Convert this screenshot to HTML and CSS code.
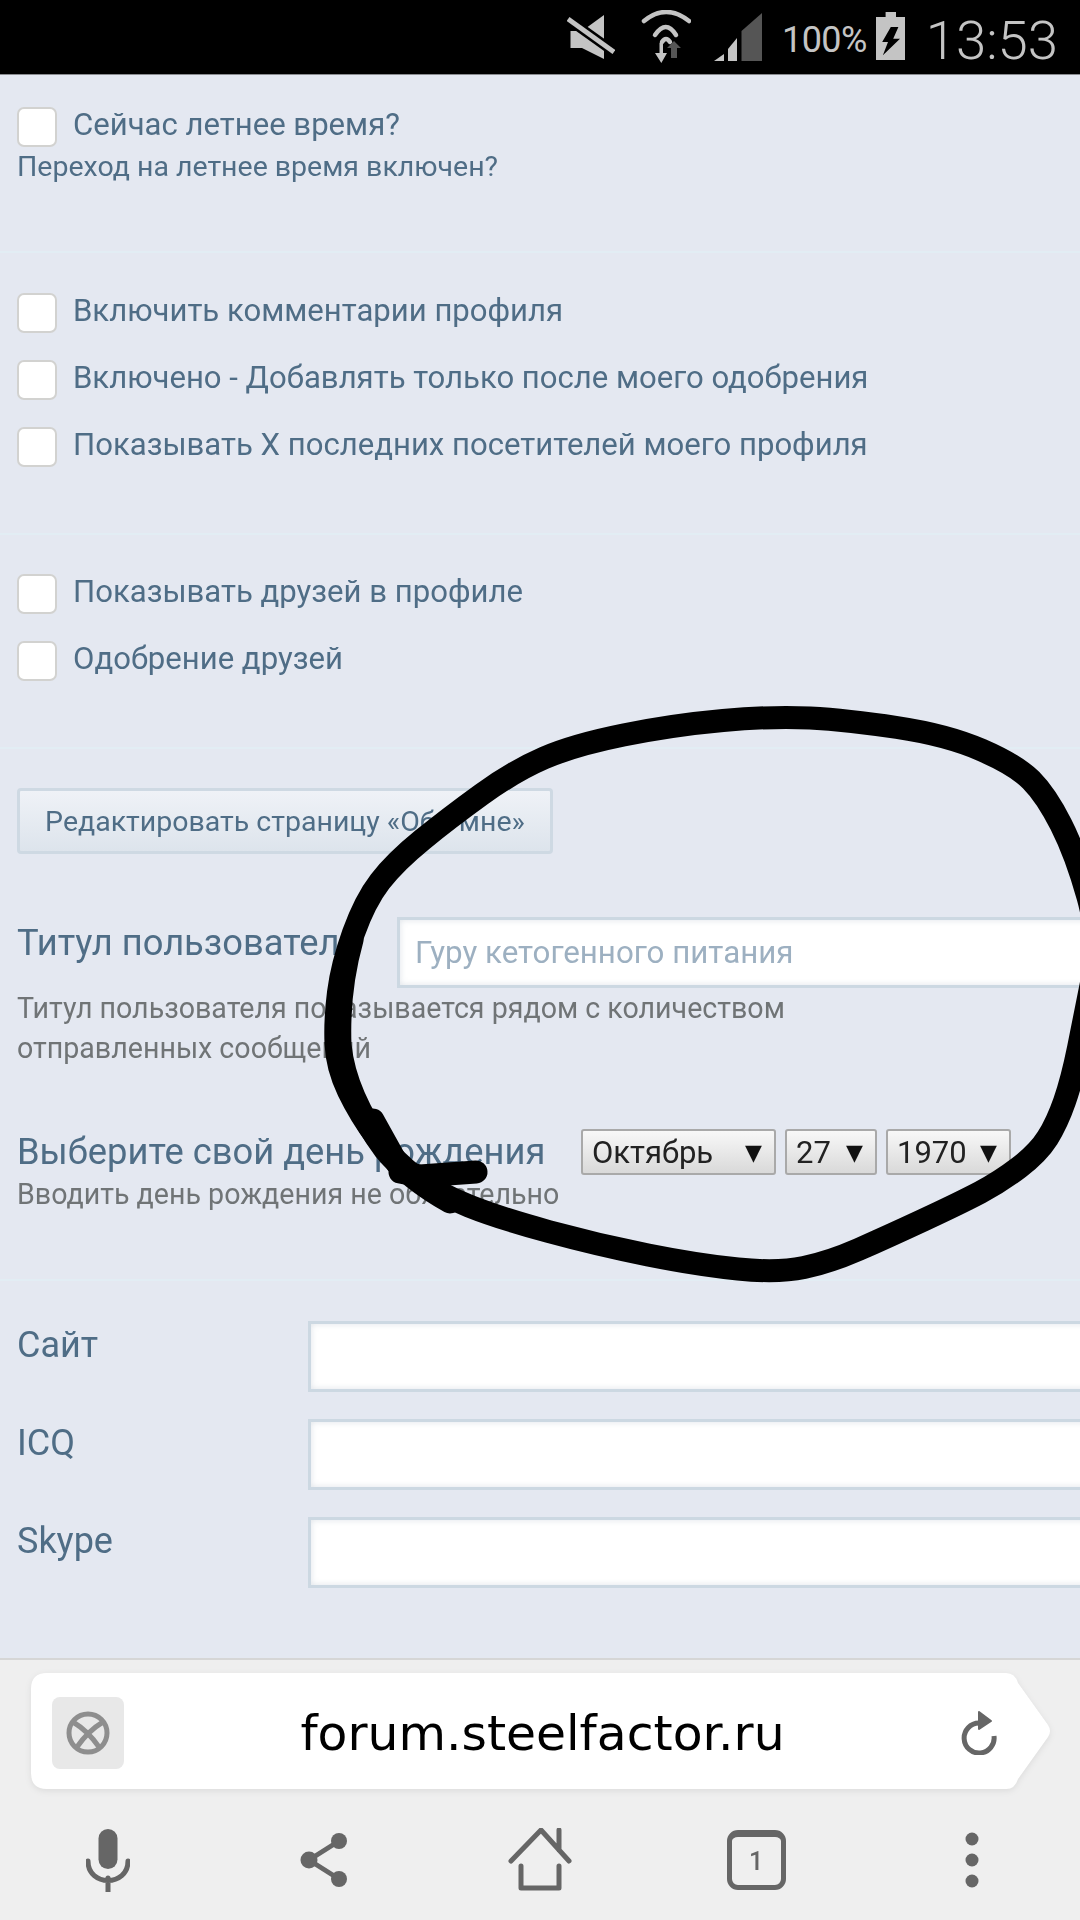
FILE: index.html
```html
<!DOCTYPE html>
<html lang="ru">
<head>
<meta charset="utf-8">
<title>Профиль</title>
<link rel="stylesheet" href="styles.css">
</head>
<body>
<div class="phone">
  <header class="status">
    <svg class="st-mute" width="48" height="44" viewBox="0 0 48 44"><path class="g" d="M3.5 16H15L37 0V44L15 33H3.5Z"/><path class="cut" d="M1 4L47 37"/><path class="slash" d="M1 4L47 37"/></svg>
    <svg class="st-wifi" width="50" height="53" viewBox="0 0 50 53"><path class="arc" d="M3 11Q25-7 48 11"/><path class="arc" d="M14 25Q25 9 35 25"/><path class="arc" d="M21 32Q25 26 29 32"/><path class="g" d="M18.500 33H22V43H26L20.300 53L14 43H18.500Z"/><path class="dk" d="M33 31L40 38H36V48H30V38H26Z"/></svg>
    <svg class="st-sig" width="48" height="49" viewBox="0 0 48 49"><path class="g" d="M0 48L10 41V48Z"/><path class="g" d="M14 36L23 25V48H14Z"/><path class="dk" d="M27.500 18L48 0V48H27.500Z"/></svg>
    <span class="st-pct">100%</span>
    <svg class="st-bat" width="29" height="48" viewBox="0 0 29 48"><path class="g" d="M9.600 0H20V5H29V48H0V5H9.600Z"/><path d="M14.800 15H22.400L17.200 26.700H24L6.900 43.300L12 30H6.200Z"/></svg>
    <span class="st-time">13:53</span>
  </header>

  <main class="page">
    <section class="sec sec-dst">
      <label class="check"><input type="checkbox"><span>Сейчас летнее время?</span></label>
      <p class="note">Переход на летнее время включен?</p>
    </section>
    <section class="sec sec-comments">
      <label class="check"><input type="checkbox"><span>Включить комментарии профиля</span></label>
      <label class="check"><input type="checkbox"><span>Включено - Добавлять только после моего одобрения</span></label>
      <label class="check"><input type="checkbox"><span>Показывать X последних посетителей моего профиля</span></label>
    </section>
    <section class="sec sec-friends">
      <label class="check"><input type="checkbox"><span>Показывать друзей в профиле</span></label>
      <label class="check"><input type="checkbox"><span>Одобрение друзей</span></label>
    </section>
    <section class="sec sec-about">
      <button class="btn" type="button">Редактировать страницу «Обо мне»</button>
      <div class="title-row">
        <h2 class="heading title-label">Титул пользователя</h2>
        <input class="field title-input" type="text" placeholder="Гуру кетогенного питания">
      </div>
      <p class="help help-title">Титул пользователя показывается рядом с количеством<br>отправленных сообщений</p>
      <div class="birth-row">
        <h2 class="heading birth-label">Выберите свой день рождения</h2>
        <div class="selects">
          <div class="sel sel-month"><span>Октябрь</span><i>▼</i></div>
          <div class="sel sel-day"><span>27</span><i>▼</i></div>
          <div class="sel sel-year"><span>1970</span><i>▼</i></div>
        </div>
      </div>
      <p class="help help-birth">Вводить день рождения не обязательно</p>
    </section>
    <section class="contacts">
      <label class="contact"><span>Сайт</span><input class="field" type="text"></label>
      <label class="contact"><span>ICQ</span><input class="field" type="text"></label>
      <label class="contact"><span>Skype</span><input class="field" type="text"></label>
    </section>
  </main>

  <footer class="browser">
    <div class="urlwrap">
      <div class="urlbar">
        <div class="fav"><svg width="44" height="44" viewBox="0 0 44 44"><circle cx="22" cy="22" r="19"/><path d="M7 11Q22 20 33 36M37 11Q22 20 11 36"/></svg></div>
        <div class="url">forum.steelfactor.ru</div>
        <svg class="reload" width="36" height="44" viewBox="0 0 36 44"><path class="rl" d="M18 12A15 15 0 1 0 33 25"/><path class="rh" d="M18 1L30 10L18 18Z"/></svg>
      </div>
    </div>
    <nav class="tools">
      <div class="tool"><svg width="44" height="64" viewBox="0 0 44 64"><rect class="f" x="12.500" y="1" width="19" height="40" rx="9.500"/><path class="s" d="M2 33C2 59 42 59 42 33M22 50V64"/></svg></div>
      <div class="tool"><svg width="48" height="54" viewBox="0 0 48 54"><path class="s" d="M39 8L9 27L39 46"/><circle class="f" cx="39" cy="8" r="8"/><circle class="f" cx="9" cy="27" r="8.500"/><circle class="f" cx="39" cy="46" r="8"/></svg></div>
      <div class="tool"><svg width="64" height="64" viewBox="0 0 64 64"><path class="s" d="M3 33L33 2L61 33M51 2V22M13 38V60H51V38"/></svg></div>
      <div class="tool tabs"><span>1</span></div>
      <div class="tool"><svg width="14" height="56" viewBox="0 0 14 56"><circle class="f" cx="7" cy="7" r="6.500"/><circle class="f" cx="7" cy="28" r="6.500"/><circle class="f" cx="7" cy="49" r="6.500"/></svg></div>
    </nav>
  </footer>

  <svg class="ink" width="1080" height="1920" viewBox="0 0 1080 1920" aria-hidden="true">
    <path d="M723 720.500Q773 716 810 718Q847 720 897 727.500Q947 735 981.500 750Q1016 765 1031 780Q1046 795 1061 824.500Q1076 854 1088 897Q1100 940 1092.500 978Q1085 1016 1078.500 1048Q1072 1080 1064.500 1101.500Q1057 1123 1047.500 1138Q1038 1153 1019 1167.500Q1000 1182 980 1192.500Q960 1203 923.500 1220Q887 1237 858.500 1249.500Q830 1262 804 1267.500Q778 1273 738 1269Q698 1265 648 1255Q598 1245 548.500 1231.500Q499 1218 469 1206Q439 1194 417 1178Q395 1162 377.500 1138.500Q360 1115 348.500 1091Q337 1067 336 1043.500Q335 1020 338.500 992.500Q342 965 353.500 933Q365 901 380 881.500Q395 862 422 840Q449 818 481.500 794.500Q514 771 544 758Q574 745 623.500 735Q673 725 723 720.500Z"/>
    <path d="M476 1172L420 1176L400 1172M373 1120L398 1165"/>
    <path d="M352 940Q338 990 340 1045Q345 1095 385 1150Q410 1180 450 1202"/>
  </svg>
</div>
</body>
</html>
```

FILE: styles.css
```css
* { box-sizing: border-box; }
html, body { margin: 0; padding: 0; }
body { width: 1080px; height: 1920px; overflow: hidden; background: #e4e8f1; font-family: Roboto, "Noto Sans", sans-serif; }
.phone { position: relative; display: flex; flex-direction: column; width: 1080px; height: 1920px; overflow: hidden; filter: blur(.5px); }

/* status bar */
.status { display: flex; align-items: flex-start; height: 75px; flex: none; background: #000; color: #c4c4c4; border-bottom: 1px solid #8a8c90; }
.status .g { fill: #c4c4c4; }
.status .dk { fill: #555; }
.status .arc { fill: none; stroke: #c4c4c4; stroke-width: 4.5; stroke-linecap: round; }
.status .cut { stroke: #000; stroke-width: 10; fill: none; }
.status .slash { stroke: #c4c4c4; stroke-width: 5; fill: none; }
.st-mute { margin: 15px 0 0 567px; }
.st-wifi { margin: 10px 0 0 26px; }
.st-sig { margin: 13px 0 0 23px; }
.st-pct { margin: 20px 0 0 20px; font-size: 36px; line-height: 41px; letter-spacing: -0.6px; }
.st-bat { margin: 12px 0 0 9px; }
.st-time { margin: 8px 0 0 21px; font-size: 54.5px; font-weight: 300; line-height: 64px; }

/* page */
.page { flex: 1; min-height: 0; overflow: hidden; color: #4f6d86; }
.sec { border-bottom: 2px solid #e2edf4; padding-left: 17px; }
.check { display: flex; align-items: center; gap: 16px; height: 40px; font-size: 31.1px; }
.check span { margin-bottom: 6px; }
.check input { appearance: none; width: 40px; height: 40px; margin: 0; flex: none; background: #fff; border: 2px solid #d2d2d0; border-radius: 7px; }
.check + .check { margin-top: 27px; }
.note { margin: 0; font-size: 28.5px; line-height: 32px; }
.sec-dst { height: 178px; padding-top: 32px; }
.sec-dst .note { margin-top: 4px; }
.sec-comments { height: 282px; padding-top: 40px; }
.sec-friends { height: 214px; padding-top: 39px; }
.sec-about { height: 532px; padding-top: 39px; padding-right: 0; }

.btn { display: block; width: 536px; height: 66px; padding: 0; border: 3px solid #ced9e3; border-radius: 4px; background: linear-gradient(#eff2f7, #dde4ec); color: #4f6d86; font: 28.5px Roboto, sans-serif; }
.heading { margin: 0; font-size: 36.3px; font-weight: 400; line-height: 42px; white-space: nowrap; }
.field { display: block; height: 71px; padding: 0 15px; background: #fff; border: 3px solid #ccd8e2; border-radius: 0; box-shadow: inset 0 0 6px rgba(160,175,190,.35); font: 31.3px Roboto, sans-serif; outline: none; }
.field::placeholder { color: #9db0c1; opacity: 1; }
.title-row { display: flex; align-items: flex-start; margin-top: 63px; }
.title-label { flex: none; width: 380px; margin-top: 5px; }
.title-input { flex: none; width: 720px; }
.help { margin: 0; color: #707476; font-size: 28.6px; }
.help-title { margin-top: 0; line-height: 40px; }
.birth-row { display: flex; align-items: center; margin-top: 61px; }
.birth-label { flex: none; width: 564px; }
.selects { display: flex; gap: 9px; }
.sel { display: flex; align-items: center; justify-content: space-between; height: 46px; padding: 0 12px 0 9px; background: linear-gradient(#f8f8f8, #d9d9d9); border: 2px solid #a9a9a9; border-radius: 3px; color: #222; font-size: 31px; }
.sel i { font-style: normal; font-size: 22px; font-family: "DejaVu Sans", sans-serif; color: #111; }
.sel-month { width: 195px; }
.sel-day { width: 92px; }
.sel-year { width: 125px; }
.help-birth { line-height: 32px; margin-top: 3px; }

.contacts { display: flex; flex-direction: column; gap: 27px; padding: 40px 0 0 17px; }
.contact { display: flex; align-items: flex-start; font-size: 36px; }
.contact span { width: 291px; flex: none; line-height: 40px; margin-top: 4px; }
.contact .field { flex: none; width: 800px; }

/* browser chrome */
.browser { flex: none; height: 262px; background: #efefef; border-top: 2px solid #d6d6d6; padding: 13px 0 0 31px; }
.urlwrap { width: 1019px; filter: drop-shadow(0 2px 3px rgba(0,0,0,.08)); }
.urlbar { display: flex; align-items: center; height: 116px; padding: 4px 53px 0 21px; background: #fff; clip-path: path("M16 0H975Q984 0 987 10L1017 52Q1021 58 1017 64L987 106Q984 116 975 116H16Q0 116 0 100V16Q0 0 16 0Z"); }
.fav { display: flex; align-items: center; justify-content: center; width: 72px; height: 72px; flex: none; background: #e8e8e8; border-radius: 8px; }
.fav svg { fill: none; stroke: #8e8e8e; stroke-width: 5; }
.url { flex: 1; text-align: center; color: #000; font-family: "DejaVu Sans", sans-serif; font-size: 48.8px; white-space: nowrap; }
.reload { flex: none; }
.rl { fill: none; stroke: #666; stroke-width: 5; }
.rh { fill: #666; stroke: #666; stroke-width: 2; stroke-linejoin: round; }
.tools { display: grid; grid-template-columns: repeat(5, 216px); margin: 39px 0 0 -31px; }
.tool { display: flex; align-items: center; justify-content: center; height: 64px; }
.tool .f { fill: #666; }
.tool .s { fill: none; stroke: #666; stroke-width: 5; stroke-linecap: round; stroke-linejoin: round; }
.tabs span { display: flex; align-items: center; justify-content: center; width: 59px; height: 60px; border: 5px solid #666; border-top-width: 7px; border-radius: 11px; color: #666; font: 500 25px Roboto, sans-serif; }

/* hand-drawn marker over the screenshot */
.ink { position: absolute; left: 0; top: 0; pointer-events: none; }
.ink path { fill: none; stroke: #000; stroke-width: 23; stroke-linecap: round; stroke-linejoin: round; }
```
